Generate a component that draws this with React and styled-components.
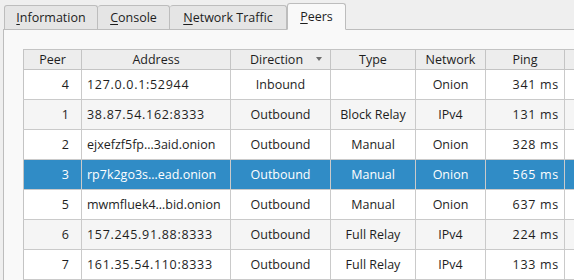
import React from "react";
import styled, { createGlobalStyle } from "styled-components";

const Global = createGlobalStyle`
  html, body {
    margin: 0;
    padding: 0;
    background: #efefef;
    overflow: hidden;
  }
  body {
    font-family: "Open Sans", "Noto Sans", sans-serif;
    font-size: 12.5px;
    color: #1e1e1e;
  }
`;

const Window = styled.div`
  width: 574px;
  height: 280px;
  padding: 2px 0 0 3px;
  box-sizing: border-box;
  display: flex;
  flex-direction: column;
  overflow: hidden;
`;

const TabBar = styled.div`
  display: flex;
  align-items: flex-end;
  height: 27px;
  padding-left: 1px;
  position: relative;
  z-index: 1;
`;

const Tab = styled.div`
  width: ${(p) => p.$w}px;
  height: ${(p) => (p.$active ? 27 : 24)}px;
  box-sizing: border-box;
  display: flex;
  align-items: center;
  justify-content: center;
  border: 1px solid #bdbdbd;
  border-bottom: ${(p) => (p.$active ? "1px solid #f9f9f9" : "none")};
  border-left: ${(p) => (p.$first || p.$active ? "1px solid #bdbdbd" : "none")};
  border-radius: 3px 3px 0 0;
  background: ${(p) => (p.$active ? "#f9f9f9" : "#e5e5e5")};
  margin-bottom: ${(p) => (p.$active ? "-1px" : "0")};
  color: #1e1e1e;
  padding-bottom: 1px;

  u {
    text-decoration: underline;
    text-underline-offset: 2px;
    text-decoration-thickness: 1px;
  }
`;

const Pane = styled.div`
  flex: 1;
  border-top: 1px solid #bdbdbd;
  border-left: 1px solid #bdbdbd;
  background: #f9f9f9;
  padding: 19px 0 0 19px;
  overflow: hidden;
`;

const Table = styled.table`
  border-collapse: collapse;
  table-layout: fixed;
  width: 580px;
  background: #ffffff;
  border-left: 1px solid #c4c4c4;
  border-top: 1px solid #c4c4c4;
`;

const HeadCell = styled.th`
  height: 19px;
  padding: 0;
  font-weight: normal;
  background: #ededed;
  border-right: 1px solid #c4c4c4;
  border-bottom: 1px solid #c4c4c4;
  text-align: center;
  position: relative;
  white-space: nowrap;
  padding-right: ${(p) => (p.$sorted ? "8px" : "0")};
`;

const SortArrow = styled.span`
  position: absolute;
  right: 8px;
  top: 7px;
  width: 0;
  height: 0;
  border-left: 3.5px solid transparent;
  border-right: 3.5px solid transparent;
  border-top: 4px solid #6e6e6e;
`;

const Row = styled.tr`
  height: 30px;
  background: ${(p) => (p.$selected ? "#308cc6" : p.$alt ? "#f5f5f5" : "#ffffff")};
  color: ${(p) => (p.$selected ? "#ffffff" : "#1e1e1e")};
`;

const Cell = styled.td`
  padding: 0 ${(p) => p.$pr || 0}px 0 ${(p) => p.$pl || 0}px;
  border-right: 1px solid #cacaca;
  border-bottom: 1px solid #cacaca;
  text-align: ${(p) => p.$align || "center"};
  letter-spacing: ${(p) => (p.$num ? "0.7px" : "normal")};
  white-space: nowrap;
  overflow: hidden;
`;

const cols = [58, 149, 100, 85, 70, 79, 40];

const peers = [
  ["4", "127.0.0.1:52944", "Inbound", "", "Onion", "341 ms"],
  ["1", "38.87.54.162:8333", "Outbound", "Block Relay", "IPv4", "131 ms"],
  ["2", "ejxefzf5fp…3aid.onion", "Outbound", "Manual", "Onion", "328 ms"],
  ["3", "rp7k2go3s…ead.onion", "Outbound", "Manual", "Onion", "565 ms"],
  ["5", "mwmfluek4…bid.onion", "Outbound", "Manual", "Onion", "637 ms"],
  ["6", "157.245.91.88:8333", "Outbound", "Full Relay", "IPv4", "224 ms"],
  ["7", "161.35.54.110:8333", "Outbound", "Full Relay", "IPv4", "133 ms"],
];

const tabs = [
  { first: "I", rest: "nformation", w: 94 },
  { first: "C", rest: "onsole", w: 72 },
  { first: "N", rest: "etwork Traffic", w: 117 },
  { first: "P", rest: "eers", w: 59, active: true },
];

export default function App() {
  return (
    <>
      <Global />
      <Window>
        <TabBar>
          {tabs.map((t, i) => (
            <Tab key={t.rest} $w={t.w} $active={t.active} $first={i === 0}>
              <span>
                <u>{t.first}</u>
                {t.rest}
              </span>
            </Tab>
          ))}
        </TabBar>
        <Pane>
          <Table>
            <colgroup>
              {cols.map((w, i) => (
                <col key={i} style={{ width: w }} />
              ))}
            </colgroup>
            <thead>
              <tr>
                <HeadCell>Peer</HeadCell>
                <HeadCell>Address</HeadCell>
                <HeadCell $sorted>
                  Direction
                  <SortArrow />
                </HeadCell>
                <HeadCell>Type</HeadCell>
                <HeadCell>Network</HeadCell>
                <HeadCell>Ping</HeadCell>
                <HeadCell />
              </tr>
            </thead>
            <tbody>
              {peers.map((p, i) => (
                <Row key={p[0]} $alt={i % 2 === 1} $selected={p[0] === "3"}>
                  <Cell $align="right" $pr={12}>{p[0]}</Cell>
                  <Cell $align="left" $pl={5} $num={!p[1].includes("onion")}>
                    {p[1]}
                  </Cell>
                  <Cell>{p[2]}</Cell>
                  <Cell>{p[3]}</Cell>
                  <Cell>{p[4]}</Cell>
                  <Cell $align="right" $pr={5} $num>{p[5]}</Cell>
                  <Cell />
                </Row>
              ))}
            </tbody>
          </Table>
        </Pane>
      </Window>
    </>
  );
}
